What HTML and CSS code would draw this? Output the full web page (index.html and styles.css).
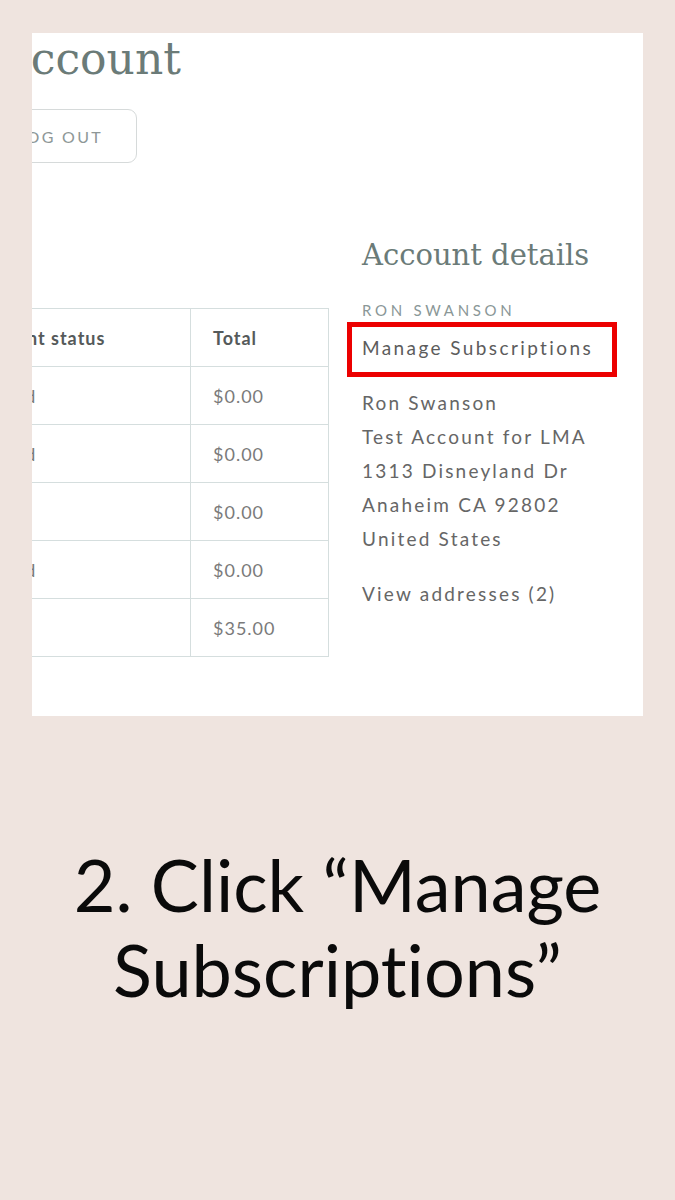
FILE: index.html
```html
<!DOCTYPE html>
<html lang="en">
<head>
<meta charset="utf-8">
<title>Manage Subscriptions</title>
<link rel="stylesheet" href="styles.css">
</head>
<body>
<main class="card">
  <div class="shift">
    <h1 class="title">Account</h1>
    <button class="logout">LOG OUT</button>
    <div class="cols">
      <section class="orders">
        <table class="order-table">
          <thead>
            <tr><th class="c-status">Payment status</th><th class="c-total">Total</th></tr>
          </thead>
          <tbody>
            <tr><td class="c-status">Unpaid</td><td class="c-total">$0.00</td></tr>
            <tr><td class="c-status">Unpaid</td><td class="c-total">$0.00</td></tr>
            <tr><td class="c-status">Paid</td><td class="c-total">$0.00</td></tr>
            <tr><td class="c-status">Unpaid</td><td class="c-total">$0.00</td></tr>
            <tr><td class="c-status">Paid</td><td class="c-total">$35.00</td></tr>
          </tbody>
        </table>
      </section>
      <aside class="details">
        <h2 class="details-title">Account details</h2>
        <p class="name-caps">RON SWANSON</p>
        <a class="manage" href="#">Manage Subscriptions</a>
        <address class="addr">
          Ron Swanson<br>
          Test Account for LMA<br>
          1313 Disneyland Dr<br>
          Anaheim CA 92802<br>
          United States
        </address>
        <a class="view" href="#">View addresses (2)</a>
      </aside>
    </div>
  </div>
</main>
<p class="caption">2. Click “Manage<br>Subscriptions”</p>
</body>
</html>
```
FILE: styles.css
```css
html, body {
  margin: 0;
  padding: 0;
}
body {
  background: #efe4df;
  padding-top: 33px;
  font-family: Lato, "Noto Sans", sans-serif;
  font-variant-ligatures: none;
}
.card {
  margin-left: 32px;
  width: 611px;
  height: 683px;
  background: #ffffff;
  overflow: hidden;
}
.shift {
  margin-left: -25px;
  padding-top: 5px;
}
.title {
  margin: 0 0 0 -8px;
  font-family: "DejaVu Serif", serif;
  font-weight: normal;
  font-size: 44px;
  line-height: 42px;
  color: #6b7b78;
}
.logout {
  display: block;
  margin-top: 29px;
  width: 130px;
  height: 54px;
  box-sizing: border-box;
  padding: 0 33px 0 0;
  text-align: right;
  background: #fff;
  border: 1px solid #d6dada;
  border-radius: 9px;
  font-family: Lato, sans-serif;
  font-size: 16px;
  letter-spacing: 2.3px;
  color: #8e9797;
}
.cols {
  display: grid;
  grid-template-columns: 322px 1fr;
  column-gap: 33px;
  margin-top: 77px;
}
.orders {
  padding-top: 68px;
}
.order-table {
  margin-left: -62px;
  width: 384px;
  border-collapse: collapse;
}
.order-table th,
.order-table td {
  height: 57px;
  padding: 0 22px;
  border: 1px solid #d5dede;
  text-align: left;
  vertical-align: middle;
  font-size: 18px;
  letter-spacing: 1px;
  color: #7a7a7a;
}
.order-table td.c-status {
  padding-left: 28px;
}
.order-table th {
  font-weight: bold;
  color: #555a5a;
}
.order-table .c-total {
  width: 93px;
}
.details-title {
  margin: 0;
  font-family: "DejaVu Serif", serif;
  font-weight: normal;
  font-size: 29px;
  line-height: 30px;
  color: #6b7b78;
}
.name-caps {
  margin: 30px 0 0;
  font-size: 15px;
  line-height: 20px;
  letter-spacing: 3.7px;
  color: #8a9797;
}
.manage {
  display: block;
  margin: 2px 0 0 -15px;
  width: 270px;
  box-sizing: border-box;
  border: 5px solid #ec0000;
  padding: 0 0 4px 10px;
  font-size: 19px;
  line-height: 41px;
  letter-spacing: 2.4px;
  color: #5c5c5c;
  text-decoration: none;
}
.addr {
  margin-top: 9px;
  font-style: normal;
  font-size: 19px;
  line-height: 34px;
  letter-spacing: 2.2px;
  color: #666;
}
.view {
  display: block;
  margin-top: 21px;
  font-size: 19px;
  line-height: 34px;
  letter-spacing: 2.2px;
  color: #666;
  text-decoration: none;
}
.caption {
  margin: 126px 0 0;
  text-align: center;
  font-family: Lato, sans-serif;
  font-weight: 400;
  font-size: 72px;
  line-height: 85px;
  color: #0a0a0a;
}
```
